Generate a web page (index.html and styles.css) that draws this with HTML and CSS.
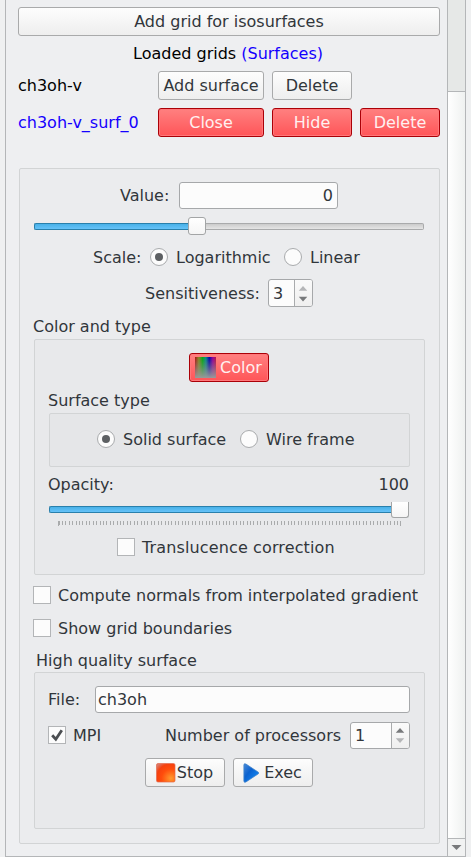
FILE: index.html
```html
<!DOCTYPE html>
<html lang="en">
<head>
<meta charset="utf-8">
<title>Surfaces</title>
<link rel="stylesheet" href="styles.css">
</head>
<body>
<div class="panel">
  <main class="content">
    <button class="btn wide">Add grid for isosurfaces</button>
    <div class="heading">Loaded grids&nbsp;<span class="blue">(Surfaces)</span></div>
    <div class="grids">
      <span>ch3oh-v</span><button class="btn">Add surface</button><button class="btn">Delete</button><span></span>
      <span class="blue">ch3oh-v_surf_0</span><button class="btn red">Close</button><button class="btn red">Hide</button><button class="btn red">Delete</button>
    </div>
    <section class="group settings">
      <div class="row value-row"><span>Value:</span><div class="field number">0</div></div>
      <div class="slider value-slider"><div class="fill"></div><div class="handle"></div><div class="rest"></div></div>
      <div class="row scale-row"><span class="scale-label">Scale:</span><i class="radio on"></i><span class="logarithmic">Logarithmic</span><i class="radio"></i><span>Linear</span></div>
      <div class="row sens-row"><span>Sensitiveness:</span>
        <div class="spin"><span class="num">3</span><svg class="arrows" width="18" height="26" viewBox="0 0 18 26"><path class="off" d="M4 10.5L8.5 5.5L13 10.5z"/><path class="act" d="M4 17L8.5 22L13 17z"/></svg></div>
      </div>
      <div class="label">Color and type</div>
      <section class="group color-group">
        <button class="btn red color-btn">
          <svg class="spectrum" width="21" height="21" viewBox="0 0 21 21">
            <defs>
              <linearGradient id="hue"><stop offset="0" stop-color="#a11"/><stop offset=".18" stop-color="#882"/><stop offset=".36" stop-color="#0a1"/><stop offset=".52" stop-color="#078a8a"/><stop offset=".68" stop-color="#00a"/><stop offset=".85" stop-color="#909"/><stop offset="1" stop-color="#b14"/></linearGradient>
              <linearGradient id="grey" x2="0" y2="1"><stop offset="0" stop-color="#888" stop-opacity="0"/><stop offset="1" stop-color="#999"/></linearGradient>
            </defs>
            <path fill="url(#hue)" d="M0 0h21v21H0z"/><path fill="url(#grey)" d="M0 0h21v21H0z"/>
          </svg><span>Color</span>
        </button>
        <div class="label">Surface type</div>
        <section class="group type-group"><i class="radio on"></i><span class="solid">Solid surface</span><i class="radio"></i><span>Wire frame</span></section>
        <div class="row opacity-row"><span>Opacity:</span><span>100</span></div>
        <div class="slider opacity-slider"><div class="fill"></div><div class="handle"></div></div>
        <svg class="ticks" width="343" height="5" viewBox="0 0 343 5" shape-rendering="crispEdges"><path d="M.5 2H343" fill="none" stroke="#a9abac" stroke-width="4" stroke-dasharray="1 2.42"/><path d="M0 0h1v5H0zM342 0h1v5h-1z" fill="#a9abac"/></svg>
        <div class="row check-row translucence"><i class="check"></i><span>Translucence correction</span></div>
      </section>
      <div class="row check-row normals"><i class="check"></i><span>Compute normals from interpolated gradient</span></div>
      <div class="row check-row boundaries"><i class="check"></i><span>Show grid boundaries</span></div>
      <div class="label quality-label">High quality surface</div>
      <section class="group quality-group">
        <div class="row file-row"><span>File:</span><div class="field">ch3oh</div></div>
        <div class="row mpi-row"><i class="check"><svg width="16" height="16" viewBox="0 0 16 16"><path d="M3.2 8.3L6.8 12.2L12.8 3.2" fill="none" stroke="#4b4e51" stroke-width="2.8"/></svg></i><span class="mpi">MPI</span><span class="processors">Number of processors</span>
          <div class="spin"><span class="num">1</span><svg class="arrows" width="18" height="25" viewBox="0 0 18 25"><path class="act" d="M4 9.5L8.5 4.5L13 9.5z"/><path class="off" d="M4 15.5L8.5 20.5L13 15.5z"/></svg></div>
        </div>
        <div class="row run-row">
          <button class="btn stop"><svg width="20" height="20" viewBox="0 0 20 20"><defs><radialGradient id="fire" cx=".78" cy=".8" r="1"><stop offset="0" stop-color="#ff9a2e"/><stop offset=".5" stop-color="#ff4d0c"/><stop offset=".78" stop-color="#f6410f"/><stop offset="1" stop-color="#d9796a"/></radialGradient></defs><rect x=".5" y=".5" width="18.5" height="18.5" rx="1.5" fill="url(#fire)" stroke="#e4694c" stroke-opacity=".7"/></svg><span>Stop</span></button>
          <button class="btn exec"><svg width="17" height="20" viewBox="0 0 17 20"><defs><linearGradient id="play" y2="1"><stop offset="0" stop-color="#4a8ad8"/><stop offset=".4" stop-color="#0b62cf"/><stop offset="1" stop-color="#1693ff"/></linearGradient></defs><path d="M.9 2Q.9 0 3 1.1L15.3 9.2Q16.2 10 15.3 10.8L3 18.9Q.9 20 .9 18z" fill="url(#play)" stroke="#3f83cc" stroke-width=".8"/></svg><span>Exec</span></button>
        </div>
      </section>
    </section>
  </main>
  <aside class="scrollbar">
    <div class="trough"></div>
    <div class="thumb"></div>
    <div class="down"><svg width="17" height="17" viewBox="0 0 17 17"><path class="act" d="M3.5 6h10L8.5 11z"/></svg></div>
  </aside>
</div>
</body>
</html>
```
FILE: styles.css
```css
* { box-sizing: border-box; }
body {
  margin: 0;
  height: 857px;
  overflow: hidden;
  background: #eff0f1;
  color: #31363b;
  font: 16px/19px "DejaVu Sans", sans-serif;
  white-space: nowrap;
}
.panel {
  display: flex;
  width: 461px;
  height: 857px;
  margin-left: 5px;
  border: solid #b4b6b8;
  border-width: 0 1px 1px;
  background: #eeeff1;
}
.content { width: 441px; padding: 7px 7px 0 12px; }
.blue { color: #1400ff; }
.btn {
  display: flex;
  align-items: center;
  justify-content: center;
  height: 29px;
  padding: 0;
  border: 1px solid #a9aaab;
  border-radius: 3px;
  background: linear-gradient(#fdfdfd, #eeeeee);
  color: #31363b;
  font: inherit;
}
.btn.red {
  border-color: #aa0007;
  background: linear-gradient(#ff8080, #ff5558);
  box-shadow: inset 0 0 0 1px #ff777a;
  color: #fff0f0;
}
.wide { width: 422px; }
.heading { display: flex; align-items: center; height: 35px; padding-left: 115px; color: #000; }
.grids {
  display: grid;
  grid-template-columns: 132px 106px 80px 80px;
  grid-auto-rows: 29px;
  gap: 8px;
  align-items: center;
  color: #000;
}
.group { border: 1px solid #d2d4d5; border-radius: 2px; }
.settings { height: 676px; margin: 31px 0 0 1px; padding: 13px 14px; background: #ebecee; }
.row { display: flex; align-items: center; }
.field {
  height: 27px;
  padding: 0 3px;
  border: 1px solid #a6a8aa;
  border-radius: 3px;
  background: #fcfcfc;
  line-height: 25px;
}
.number { width: 159px; padding-right: 4px; text-align: right; }
.value-row { justify-content: space-between; width: 218px; margin-left: 86px; }
.slider { display: flex; align-items: center; }
.fill {
  height: 7px;
  border: 1px solid #2980ac;
  border-right: 0;
  border-radius: 2px 0 0 2px;
  background: linear-gradient(#48b1e8, #66c2f8);
}
.rest {
  flex: 1;
  height: 7px;
  border: 1px solid #a9aaab;
  border-left: 0;
  border-radius: 0 2px 2px 0;
  background: linear-gradient(#cbcbcb, #e5e5e5);
}
.handle {
  width: 18px;
  height: 18px;
  border: 1px solid #a3a5a6;
  border-radius: 3px;
  background: linear-gradient(#fff, #f5f5f5);
}
.value-slider { width: 390px; height: 18px; margin-top: 8px; }
.value-slider .fill { width: 154px; }
.scale-row { height: 18px; margin: 13px 0 0 59px; }
.scale-label { width: 57px; }
.radio {
  display: flex;
  align-items: center;
  justify-content: center;
  width: 18px;
  height: 18px;
  margin-right: 8px;
  border: 1px solid #a9abad;
  border-radius: 50%;
  background: #fcfcfc;
}
.radio.on::after { content: ""; width: 8px; height: 8px; border-radius: 50%; background: #5d6063; }
.logarithmic { width: 108px; }
.sens-row { justify-content: space-between; width: 168px; height: 28px; margin: 13px 0 0 111px; }
.spin {
  display: flex;
  width: 45px;
  height: 28px;
  overflow: hidden;
  border: 1px solid #a6a8aa;
  border-radius: 3px;
  background: #fcfcfc;
}
.num { flex: 1; padding-left: 4px; line-height: 27px; }
.arrows { width: 18px; border-left: 1px solid #a9abad; background: linear-gradient(#fafafa, #efefef); }
.act { fill: #77797b; }
.off { fill: #b5b6b8; }
.label { height: 19px; margin: 10px 0 3px -1px; }
.color-group { height: 236px; padding: 13px 14px; background: #e8e9eb; }
.color-btn { width: 80px; margin-left: 140px; padding-right: 1px; }
.spectrum { margin-right: 4px; }
.color-group .label { margin-top: 9px; }
.type-group { display: flex; align-items: center; height: 54px; padding: 0 0 2px 47px; background: #e5e6e8; }
.solid { width: 117px; }
.opacity-row { justify-content: space-between; height: 19px; margin: 8px 1px 0 -1px; }
.opacity-slider { width: 360px; height: 16px; margin-top: 8px; align-items: flex-start; }
.opacity-slider .fill { width: 342px; margin-top: 4px; }
.opacity-slider .handle { height: 16px; border-top: 0; border-radius: 0 0 3px 3px; }
.ticks { display: block; margin: 3px 0 0 9px; }
.check-row { height: 18px; }
.check {
  display: block;
  width: 18px;
  height: 18px;
  margin-right: 7px;
  border: 1px solid #b3b5b7;
  background: #fcfcfc;
}
.check svg { display: block; }
.translucence { margin: 12px 0 0 68px; letter-spacing: .13px; }
.normals { margin: 11px 0 0 -1px; }
.boundaries { margin: 15px 0 0 -1px; }
.quality-label { margin: 14px 0 2px 2px; }
.quality-group { height: 157px; padding: 13px 14px; background: #e8e9eb; }
.file-row { justify-content: space-between; margin-left: -1px; }
.file-row .field { width: 315px; padding-left: 2px; }
.mpi-row { height: 27px; margin: 9px 0 0 -1px; }
.mpi-row .check { margin-bottom: 1px; }
.mpi { width: 92px; }
.mpi-row .spin { width: 60px; height: 27px; margin-left: auto; }
.mpi-row .num { line-height: 25px; }
.run-row { gap: 8px; margin: 9px 0 0 96px; }
.run-row .btn { width: 80px; }
.stop { padding-right: 1px; }
.exec { padding-right: 1px; }
.stop svg { margin-right: 1px; }
.exec svg { margin-right: 4px; }
.scrollbar { display: flex; flex-direction: column; width: 18px; border-left: 1px solid #b4b6b8; }
.trough { height: 91px; background: #e6e8e7; }
.thumb { flex: 1; border: solid #b4b6b8; border-width: 1px 0; background: linear-gradient(90deg, #fff, #eff1f0); }
.down { height: 17px; background: #f1f2f2; }
.down svg { display: block; }
```
